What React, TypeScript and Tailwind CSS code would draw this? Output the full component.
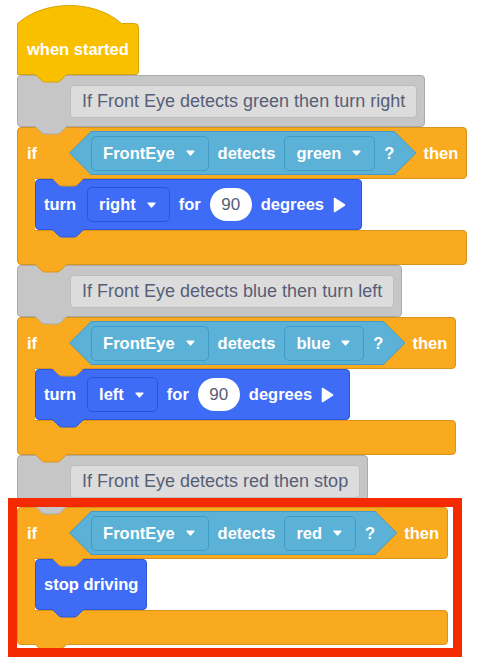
import React from "react";

const ORANGE = "#f9aa1e";
const ORANGE_EDGE = "#d9931c";
const GRAY = "#c6c6c6";
const GRAY_EDGE = "#ababab";
const BLUE = "#3f6cf6";
const BLUE_EDGE = "#2d57d6";
const YELLOW = "#f9c000";
const YELLOW_EDGE = "#d6a300";

const BUMP = "M1 0 c2 0 3 1 4 2 l4 4 c1 1 2 2 4 2 h12 c2 0 3 -1 4 -2 l4 -4 c1 -1 2 -2 4 -2";

function Bump({ className, fill, stroke }: { className: string; fill: string; stroke: string }) {
  return (
    <svg className={`pointer-events-none absolute z-10 ${className}`} width="38" height="10" viewBox="0 0 38 10">
      <path d={BUMP + " Z"} fill={fill} />
      <path d={BUMP} fill="none" stroke={stroke} strokeWidth="1" />
    </svg>
  );
}

function Arrow() {
  return (
    <svg width="9" height="6" viewBox="0 0 9 6">
      <path d="M1 1 H8 L4.5 5 Z" fill="white" stroke="white" strokeWidth="1.2" strokeLinejoin="round" />
    </svg>
  );
}

function Drop({ label, tone }: { label: string; tone: "sky" | "blue" }) {
  const cls = tone === "sky" ? "border-[#3f9cc6] bg-[#5cb1d6]" : "border-[#2b55d4] bg-[#3f6cf6]";
  return (
    <div className={`flex h-[35px] items-center gap-[11px] rounded-[5px] border pl-[11px] pr-[13px] font-bold text-white ${cls}`}>
      <span>{label}</span>
      <Arrow />
    </div>
  );
}

function Hex({ color }: { color: string }) {
  return (
    <div className="relative ml-[32px] flex h-[44px] items-center pl-[22px] pr-[22px]">
      <div className="absolute inset-0 bg-[#3f9cc6] [clip-path:polygon(0_50%,22px_0,calc(100%_-_22px)_0,100%_50%,calc(100%_-_22px)_100%,22px_100%)]" />
      <div className="absolute inset-[1px] bg-[#5cb1d6] [clip-path:polygon(0_50%,21px_0,calc(100%_-_21px)_0,100%_50%,calc(100%_-_21px)_100%,21px_100%)]" />
      <div className="relative flex items-center gap-[9px] font-bold text-white">
        <Drop label="FrontEye" tone="sky" />
        <span>detects</span>
        <Drop label={color} tone="sky" />
        <span>?</span>
      </div>
    </div>
  );
}

function Comment({ text }: { text: string }) {
  return (
    <div className="relative flex h-[52px] w-fit items-center rounded-[4px] border border-[#ababab] bg-[#c6c6c6] pl-[52px] pr-[7px]">
      <div className="flex h-[33px] items-center rounded-[4px] border border-[#bdbdbd] bg-[#dcdcdc] px-[11px] text-[18px] text-[#575e75]">
        {text}
      </div>
      <Bump className="left-[14px] top-full" fill={GRAY} stroke={GRAY_EDGE} />
    </div>
  );
}

function Play() {
  return (
    <svg width="13" height="16" viewBox="0 0 13 16">
      <path d="M1.5 1.5 L11.5 8 L1.5 14.5 Z" fill="white" stroke="white" strokeWidth="1.5" strokeLinejoin="round" />
    </svg>
  );
}

function Turn({ dir }: { dir: string }) {
  return (
    <div className="relative flex h-[51px] items-center gap-[9px] rounded-[4px] border border-[#2d57d6] bg-[#3f6cf6] pl-[8px] pr-[15px] font-bold text-white">
      <span className="mr-[2px]">turn</span>
      <Drop label={dir} tone="blue" />
      <span>for</span>
      <div className="flex h-[33px] w-[42px] items-center justify-center rounded-full bg-white text-[17px] font-normal text-[#575e75]">90</div>
      <span>degrees</span>
      <Play />
      <Bump className="left-[13px] top-full" fill={BLUE} stroke={BLUE_EDGE} />
    </div>
  );
}

function Stop() {
  return (
    <div className="relative flex h-[51px] items-center rounded-[4px] border border-[#2d57d6] bg-[#3f6cf6] pl-[8px] pr-[8px] font-bold text-white">
      <span>stop driving</span>
      <Bump className="left-[13px] top-full" fill={BLUE} stroke={BLUE_EDGE} />
    </div>
  );
}

function IfBlock({ color, children }: { color: string; children: React.ReactNode }) {
  return (
    <div className="relative flex w-fit flex-col">
      <div className="relative flex h-[52px] items-center rounded-t-[4px] rounded-br-[4px] border border-[#d9931c] bg-[#f9aa1e] pl-[9px] pr-[8px] font-bold text-white">
        <span>if</span>
        <Hex color={color} />
        <span className="ml-[7px]">then</span>
        <Bump className="left-[31px] top-full" fill={ORANGE} stroke={ORANGE_EDGE} />
      </div>
      <div className="flex">
        <div className="relative z-[1] -my-px w-[18px] border-l border-[#d9931c] bg-[#f9aa1e]" />
        {children}
      </div>
      <div className="relative h-[35px] rounded-b-[4px] rounded-tr-[4px] border border-[#d9931c] bg-[#f9aa1e]">
        <Bump className="left-[14px] top-full" fill={ORANGE} stroke={ORANGE_EDGE} />
      </div>
    </div>
  );
}

function Hat() {
  return (
    <div className="relative flex h-[70px] w-[122px] flex-col justify-end">
      <svg className="absolute inset-0" width="122" height="70" viewBox="0 0 122 70">
        <path
          d="M0.5 69.5 V18.5 C27.5 -5.5 77.5 -5.5 104.5 18.5 H117.5 Q121.5 18.5 121.5 22.5 V66.5 Q121.5 69.5 118.5 69.5 Z"
          fill={YELLOW}
          stroke={YELLOW_EDGE}
          strokeWidth="1"
        />
      </svg>
      <div className="relative flex h-[52px] items-center pl-[10px] font-bold text-white">when started</div>
      <Bump className="left-[15px] top-[69px]" fill={YELLOW} stroke={YELLOW_EDGE} />
    </div>
  );
}

export default function App() {
  return (
    <div className="relative min-h-[660px] w-[490px] bg-white pl-[17px] pt-[5px] text-[16.5px] leading-none [font-family:'Liberation_Sans',Arial,sans-serif]">
      <div className="flex flex-col items-start">
        <Hat />
        <Comment text="If Front Eye detects green then turn right" />
        <IfBlock color="green">
          <Turn dir="right" />
        </IfBlock>
        <Comment text="If Front Eye detects blue then turn left" />
        <IfBlock color="blue">
          <Turn dir="left" />
        </IfBlock>
        <Comment text="If Front Eye detects red then stop" />
        <IfBlock color="red">
          <Stop />
        </IfBlock>
      </div>
      <div className="pointer-events-none absolute left-[8px] top-[498px] z-20 h-[159px] w-[454px] border-[9px] border-[#f42a00]" />
    </div>
  );
}
